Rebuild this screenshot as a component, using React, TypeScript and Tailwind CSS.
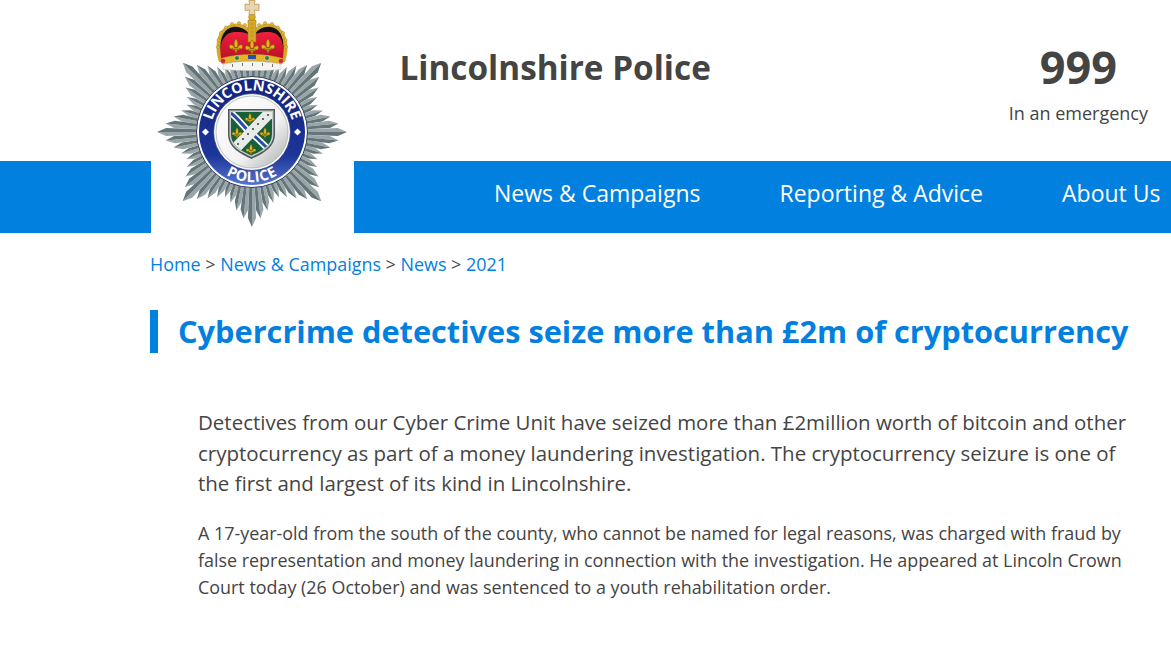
const rays = () => {
  const out: { d: string; fill: string; len: number }[] = [];
  const cx = 252;
  const cy = 132;
  const count = 64;
  const half = Math.PI / count;
  const p = (r: number, t: number) => `${(cx + r * Math.sin(t)).toFixed(2)},${(cy - r * Math.cos(t)).toFixed(2)}`;
  for (let i = 0; i < count; i++) {
    const a = (i / count) * Math.PI * 2;
    const step = i % 8;
    const off = Math.min(step, 8 - step);
    const tip = i % 16 === 8 ? 98 : 95;
    const len = tip - [0, 8, 15, 21, 24][off];
    const sh = len - 9;
    const w = half * 1.02;
    out.push({ len, d: `M${p(50, a - w)} L${p(sh, a - w * 0.95)} L${p(len, a)} L${p(50, a)} Z`, fill: "#98a6a7" });
    out.push({ len, d: `M${p(50, a + w)} L${p(sh, a + w * 0.95)} L${p(len, a)} L${p(50, a)} Z`, fill: "#647478" });
  }
  return out.sort((x, y) => x.len - y.len);
};

const Fleur = ({ x, y, s = 1 }: { x: number; y: number; s?: number }) => (
  <g transform={`translate(${x} ${y}) scale(${s})`} fill="#e3b51f" stroke="#7a5a08" strokeWidth="0.35">
    <path d="M0 -5 C1.6 -3 1.6 -1 0.8 1 L-0.8 1 C-1.6 -1 -1.6 -3 0 -5 Z" />
    <path d="M-1 1 C-2 -1 -4.6 -1.6 -4.6 0.6 C-4.6 2 -3.2 2.4 -2.6 1.6 C-2.6 2.8 -1.6 2.8 -1 2 Z" />
    <path d="M1 1 C2 -1 4.6 -1.6 4.6 0.6 C4.6 2 3.2 2.4 2.6 1.6 C2.6 2.8 1.6 2.8 1 2 Z" />
    <rect x="-2.2" y="1.4" width="4.4" height="1.2" />
    <path d="M-1 2.6 L1 2.6 L0 5 Z" />
  </g>
);

const Pearls = ({ pts, r = 1.5 }: { pts: number[][]; r?: number }) => (
  <g fill="#e9c64a" stroke="#9a7413" strokeWidth="0.5">
    {pts.map(([x, y]) => (
      <circle key={`${x}-${y}`} cx={x} cy={y} r={r} />
    ))}
  </g>
);

const Badge = () => (
  <svg viewBox="150 0 210 235" className="absolute left-[-1px] top-[-161px] h-[235px] w-[210px]">
    <defs>
      <linearGradient id="ring" x1="0" y1="0" x2="0" y2="1">
        <stop offset="0" stopColor="#14247c" />
        <stop offset="0.72" stopColor="#1c3699" />
        <stop offset="1" stopColor="#5573cf" />
      </linearGradient>
      <linearGradient id="disc" x1="0" y1="0" x2="1" y2="1">
        <stop offset="0" stopColor="#ffffff" />
        <stop offset="0.6" stopColor="#f2f2f2" />
        <stop offset="1" stopColor="#a9adad" />
      </linearGradient>
      <linearGradient id="red" x1="0" y1="0" x2="0" y2="1">
        <stop offset="0" stopColor="#f0203e" />
        <stop offset="1" stopColor="#bd1029" />
      </linearGradient>
      <path id="topArc" d="M210.5 132 A41.5 41.5 0 0 1 293.5 132" />
      <path id="botArc" d="M202 132 A50 50 0 0 0 302 132" />
      <clipPath id="shieldClip">
        <path d="M231 112 L272 112 L272 134 C272 146 261 151 251.5 155.5 C242 151 231 146 231 134 Z" />
      </clipPath>
    </defs>

    {rays().map((r, i) => (
      <path key={i} d={r.d} fill={r.fill} />
    ))}

    {/* crown */}
    <path d="M219 62 C213 44 218 27 232 24 C241 22 248 26 252 32 C256 26 263 22 272 24 C286 28 291 44 285 62 Z" fill="#d8a928" />
    <path d="M222 58 C218 42 222 29 233 27 C242 26 249 31 252 40 C255 31 262 26 271 27 C282 29 286 42 282 58 Z" fill="#111111" />
    <path d="M221 58 C219 44 223 33 234 32 C243 31.5 249 33 252 37 C255 33 261 31.5 270 32 C281 33 285 44 283 58 Z" fill="url(#red)" />
    <Pearls
      pts={[[218, 47], [218.5, 40], [221, 33], [226, 27.5], [232, 24], [239, 23], [245, 25], [259, 25], [265, 23], [272, 24], [278, 27.5], [283, 33], [285.5, 40], [286, 47]]}
    />
    <rect x="248" y="20" width="8" height="22" fill="#d8a928" stroke="#9a7413" strokeWidth="0.5" />
    <Pearls pts={[[252, 24], [252, 28], [252, 32], [252, 36]]} r={1} />
    <circle cx="252" cy="17" r="3.4" fill="#d8a928" stroke="#9a7413" strokeWidth="0.5" />
    <path d="M249 0.5 L255 0.5 L254.5 4.5 L259 4 L259 10.5 L254.5 10 L255 14.5 L249 14.5 L249.5 10 L245 10.5 L245 4 L249.5 4.5 Z" fill="#ead5b2" stroke="#b98f3c" strokeWidth="0.7" />
    <Fleur x={236} y={46} s={1.45} />
    <Fleur x={252} y={47} s={1.45} />
    <Fleur x={268} y={46} s={1.45} />
    <path d="M222 58 C240 53 264 53 282 58 L282 64 C264 60 240 60 222 64 Z" fill="#e2b52a" stroke="#a37c12" strokeWidth="0.4" />
    <rect x="248" y="55" width="8" height="4" fill="#2a4fa8" />
    <circle cx="237" cy="58" r="2.4" fill="#2f7d3a" stroke="#f4e9b8" strokeWidth="0.6" />
    <circle cx="267" cy="58" r="2.4" fill="#2f7d3a" stroke="#f4e9b8" strokeWidth="0.6" />
    <circle cx="223" cy="61" r="2.3" fill="#d8283c" />
    <circle cx="281" cy="61" r="2.3" fill="#d8283c" />
    <path d="M223 64.5 C240 60 264 60 281 64.5 L281 69.5 C264 71 240 71 223 69.5 Z" fill="#f4f5f3" stroke="#b9bcb9" strokeWidth="0.5" />
    <g fill="#777">
      <rect x="232" y="64" width="1" height="3" />
      <rect x="242" y="63" width="1" height="3" />
      <rect x="252" y="63" width="1" height="3" />
      <rect x="262" y="63" width="1" height="3" />
      <rect x="272" y="64" width="1" height="3" />
    </g>

    {/* ring */}
    <circle cx="252" cy="132" r="55.5" fill="#ffffff" stroke="#2d3a63" strokeWidth="1" />
    <circle cx="252" cy="132" r="53" fill="url(#ring)" />
    <circle cx="252" cy="132" r="38.5" fill="#f5f6f6" stroke="#26357e" strokeWidth="0.8" />
    <circle cx="252" cy="132" r="36" fill="url(#disc)" stroke="#9da2a3" strokeWidth="0.6" />
    <text fill="#fff" fontSize="14.5" fontWeight="700" fontFamily="'Open Sans', sans-serif">
      <textPath href="#topArc" startOffset="50%" textAnchor="middle">LINCOLNSHIRE</textPath>
    </text>
    <text fill="#fff" fontSize="14.5" fontWeight="700" letterSpacing="0.6" fontFamily="'Open Sans', sans-serif">
      <textPath href="#botArc" startOffset="50%" textAnchor="middle">POLICE</textPath>
    </text>
    <path d="M205.5 128.5 L209 132 L205.5 135.5 L202 132 Z" fill="#fff" />
    <path d="M297.5 128.5 L301 132 L297.5 135.5 L294 132 Z" fill="#fff" />

    {/* shield */}
    <path d="M228 109 L275 109 L275 134 C275 148 262 154 251.5 159 C241 154 228 148 228 134 Z" fill="#50575b" />
    <path d="M229.5 110.5 L273.5 110.5 L273.5 134 C273.5 147 261.5 152.5 251.5 157 C241.5 152.5 229.5 147 229.5 134 Z" fill="#c4c9c9" />
    <g clipPath="url(#shieldClip)">
      <rect x="228" y="109" width="47" height="50" fill="#17613a" />
      <path d="M231 113 C240 120 244 128 252 134 C260 140 264 146 272 152" stroke="#fff" strokeWidth="6.5" fill="none" />
      <path d="M231 113 C240 120 244 128 252 134 C260 140 264 146 272 152" stroke="#2b4ca6" strokeWidth="3" fill="none" />
      <path d="M278 104 L226 158" stroke="#e8ebe8" strokeWidth="11" />
      <g fill="#3e4a46">
        <circle cx="268" cy="115" r="1.1" />
        <circle cx="263" cy="119" r="1.1" />
        <circle cx="258" cy="124" r="1.1" />
        <circle cx="253" cy="129" r="1.1" />
        <circle cx="248" cy="134" r="1.1" />
        <circle cx="243" cy="139" r="1.1" />
        <circle cx="238" cy="144" r="1.1" />
      </g>
    </g>
    <Fleur x={250} y={118.5} s={1.05} />
    <Fleur x={237} y={133} s={1.05} />
    <Fleur x={265} y={133} s={1.05} />
    <Fleur x={251} y={149.5} s={1.05} />
  </svg>
);

export default function App() {
  return (
    <div className="w-full overflow-hidden bg-white font-['Open_Sans',sans-serif] text-[#444]">
      <header className="flex h-[161px] items-start justify-between pl-[399.5px] pr-[23px]">
        <h2 className="mt-[43px] text-[33.3px] leading-[48px] font-bold">Lincolnshire Police</h2>
        <div className="mt-[38px] flex flex-col items-center">
          <span className="text-[45px] leading-[57px] font-bold">999</span>
          <span className="mt-[6px] text-[18px] leading-[24px]">In an emergency</span>
        </div>
      </header>

      <nav className="flex h-[72px] bg-[#0280e0] text-white">
        <div className="relative ml-[151px] h-full w-[203px] shrink-0 bg-white">
          <Badge />
        </div>
        <ul className="ml-auto flex gap-[79px] pt-[16px] pr-[10.5px] text-[23px] leading-[32px]">
          <li>News &amp; Campaigns</li>
          <li>Reporting &amp; Advice</li>
          <li>About Us</li>
        </ul>
      </nav>

      <main className="pl-[150px] pr-[40px]">
        <p className="mt-[18px] text-[17.92px] leading-[27px]">
          <a className="text-[#0280e0]">Home</a> &gt; <a className="text-[#0280e0]">News &amp; Campaigns</a> &gt;{" "}
          <a className="text-[#0280e0]">News</a> &gt; <a className="text-[#0280e0]">2021</a>
        </p>
        <h1 className="mt-[32px] border-l-[8px] border-[#0280e0] pl-[20px] text-[30.72px] leading-[43px] font-bold text-[#0280e0]">
          Cybercrime detectives seize more than £2m of cryptocurrency
        </h1>
        <div className="pl-[48px]">
          <p className="mt-[54px] text-[20.48px] leading-[30.72px]">
            Detectives from our Cyber Crime Unit have seized more than £2million worth of bitcoin and other cryptocurrency as part of a money laundering investigation. The cryptocurrency seizure is one of the first and largest of its kind in Lincolnshire.
          </p>
          <p className="mt-[21px] text-[17.92px] leading-[27px]">
            A 17-year-old from the south of the county, who cannot be named for legal reasons, was charged with fraud by false representation and money laundering in connection with the investigation. He appeared at Lincoln Crown Court today (26 October) and was sentenced to a youth rehabilitation order.
          </p>
        </div>
      </main>
    </div>
  );
}
